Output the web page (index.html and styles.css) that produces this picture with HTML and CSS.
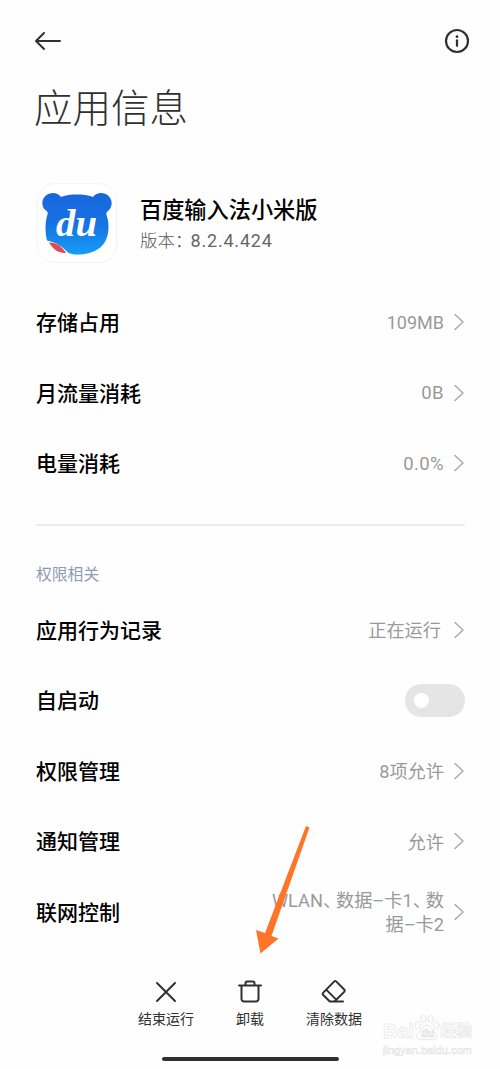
FILE: index.html
```html
<!DOCTYPE html>
<html lang="zh-CN">
<head>
  <meta charset="UTF-8">
  <title>应用信息</title>
  <link rel="stylesheet" href="styles.css">
</head>
<body>
  <div class="screen">
    <header class="topbar">
      <svg class="back" width="28" height="20" viewBox="0 0 28 20"><path d="M26 10H2M10 2L2 10l8 8"/></svg>
      <svg class="info" width="26" height="26" viewBox="0 0 26 26"><circle cx="13" cy="13" r="11"/><path d="M13 12.300v5.500"/><circle class="dot" cx="13" cy="8.700" r="1.400"/></svg>
    </header>
    <h1>应用信息</h1>

    <section class="app">
      <div class="app-icon">
        <svg width="78" height="78" viewBox="0 0 78 78">
          <defs>
            <linearGradient id="bear" x1="0" y1="0" x2="0" y2="1">
              <stop offset="0" stop-color="#1766dc"/>
              <stop offset="0.500" stop-color="#1673e4"/>
              <stop offset="1" stop-color="#159cf6"/>
            </linearGradient>
          </defs>
          <path fill="url(#bear)" d="M23 13C28 11 33 10.500 39 10.500s11 .500 16 2.500C58 8.500 65 7.500 69.500 11c5.500 4 5.500 12 .500 16-1.500 1-2 2-1.500 4 1 3 2 6 2 12C70.500 60 60 70.500 39 70.500c-4 0-6-.500-9-2-5-5-11-10-21-12-1-4-1.500-8-1.500-13 0-5 1-10 2-13 .500-2 0-3-1.500-4C3 23 3 15 8.500 11 13 7.500 20 8.500 23 13z"/>
          <path fill="#e4494d" d="M11 58.500c7-.500 13 4 17 10.500-7 .500-13-3.500-17-10.500z"/>
          <text class="du" x="18" y="52" textLength="41" lengthAdjust="spacingAndGlyphs">du</text>
        </svg>
      </div>
      <div class="app-text">
        <div class="app-name">百度输入法小米版</div>
        <div class="app-version">版本：<span>8.2.4.424</span></div>
      </div>
    </section>

    <ul class="list">
      <li><span class="name">存储占用</span><span class="value">109MB</span><svg class="arrow" width="12" height="18" viewBox="0 0 12 18"><path d="M2 1.500L10 9l-8 7.500"/></svg></li>
      <li><span class="name">月流量消耗</span><span class="value short">0B</span><svg class="arrow" width="12" height="18" viewBox="0 0 12 18"><path d="M2 1.500L10 9l-8 7.500"/></svg></li>
      <li><span class="name">电量消耗</span><span class="value short">0.0%</span><svg class="arrow" width="12" height="18" viewBox="0 0 12 18"><path d="M2 1.500L10 9l-8 7.500"/></svg></li>
    </ul>

    <div class="divider"></div>
    <h2>权限相关</h2>

    <ul class="list">
      <li><span class="name">应用行为记录</span><span class="value cn running">正在运行</span><svg class="arrow" width="12" height="18" viewBox="0 0 12 18"><path d="M2 1.500L10 9l-8 7.500"/></svg></li>
      <li><span class="name">自启动</span><span class="switch"></span></li>
      <li><span class="name">权限管理</span><span class="value cn">8项允许</span><svg class="arrow" width="12" height="18" viewBox="0 0 12 18"><path d="M2 1.500L10 9l-8 7.500"/></svg></li>
      <li><span class="name">通知管理</span><span class="value cn">允许</span><svg class="arrow" width="12" height="18" viewBox="0 0 12 18"><path d="M2 1.500L10 9l-8 7.500"/></svg></li>
      <li><span class="name">联网控制</span><span class="value cn network">WLAN<i>、</i>数据–卡1<i>、</i>数<br>据–卡2</span><svg class="arrow" width="12" height="18" viewBox="0 0 12 18"><path d="M2 1.500L10 9l-8 7.500"/></svg></li>
    </ul>

    <footer class="actions">
      <div class="action">
        <svg width="28" height="28" viewBox="0 0 28 28"><path d="M5 5l18 18M23 5L5 23"/></svg>
        <span>结束运行</span>
      </div>
      <div class="action">
        <svg width="28" height="28" viewBox="0 0 28 28"><path d="M3 7.500h22M5.500 7.500v13.500a2.500 2.500 0 0 0 2.500 2.500h12a2.500 2.500 0 0 0 2.500-2.500V7.500M9.500 7V5a1.500 1.500 0 0 1 1.500-1.500h6A1.500 1.500 0 0 1 18.500 5v2"/></svg>
        <span>卸载</span>
      </div>
      <div class="action">
        <svg width="28" height="28" viewBox="0 0 28 28"><path d="M14.300 3.400a1.300 1.300 0 0 1 1.800 0l8.300 8.400a1.300 1.300 0 0 1 0 1.800L14.500 23.500H9.800L3 16.700a1.300 1.300 0 0 1 0-1.800zM6.200 11.600l10 10M14 23.500h9"/></svg>
        <span>清除数据</span>
      </div>
    </footer>
    <div class="home-bar"></div>

    <svg class="pointer" width="60" height="134" viewBox="0 0 60 134"><path d="M56 6l3.500 1.500-38 108.500 7 2.500-18 15L6 110l9 3z"/></svg>

    <div class="watermark">
      <div class="brand">
        <span>Bai</span>
        <svg width="26" height="30" viewBox="0 0 29 30"><ellipse cx="4" cy="12" rx="3" ry="4"/><ellipse cx="10.500" cy="5" rx="3" ry="4"/><ellipse cx="18.500" cy="5" rx="3" ry="4"/><ellipse cx="25" cy="12" rx="3" ry="4"/><path d="M14.500 12c5 0 6 5 9 8s3 8-2 8H7c-5 0-5-5-2-8s4.500-8 9.500-8z"/><text x="8" y="25">du</text></svg>
        <span class="jingyan">经验</span>
      </div>
      <div class="site">jingyan.baidu.com</div>
    </div>
  </div>
</body>
</html>
```
FILE: styles.css
```css
* {
  box-sizing: border-box;
}
body {
  margin: 0;
  background: #fefefe;
  font-family: "Noto Sans CJK SC", sans-serif;
  color: #000;
}
.screen {
  position: relative;
  display: flex;
  flex-direction: column;
  height: 1069px;
  padding: 28px 35px 0 36px;
  overflow: hidden;
}
svg {
  display: block;
  fill: none;
  stroke-linecap: round;
  stroke-linejoin: round;
}
.topbar {
  display: flex;
  justify-content: space-between;
  align-items: center;
  height: 26px;
  margin: 0 -5px 0 -2px;
  stroke: #303030;
  stroke-width: 2;
}
.info {
  stroke-width: 2.200;
}
.dot {
  fill: #303030;
  stroke: none;
}
h1 {
  margin: 22px 0 2px -2px;
  height: 58px;
  line-height: 58px;
  font-size: 38.500px;
  font-weight: 300;
  color: #303030;
}
.app {
  display: flex;
  align-items: center;
  height: 78px;
  margin-top: 48px;
}
.app-icon {
  width: 80px;
  height: 80px;
  border: 1px solid #f4f4f4;
  border-radius: 18px;
  margin-left: 1px;
  background: #fff;
}
.app-icon svg path,
.app-icon svg text {
  stroke: none;
}
.du {
  font: italic bold 37px "Liberation Serif", serif;
  fill: #fff;
}
.app-text {
  margin-left: 23px;
  padding-top: 2px;
}
.app-name {
  line-height: 32px;
  font-size: 22.200px;
  font-weight: 500;
}
.app-version {
  line-height: 31px;
  font-size: 17.500px;
  font-weight: 300;
  color: #555;
  white-space: nowrap;
}
.app-version span {
  font-family: Roboto, sans-serif;
  font-size: 18px;
  font-weight: 400;
  letter-spacing: 0.800px;
  margin-left: -2px;
  color: #666;
}
.list {
  list-style: none;
  margin: 0;
  padding: 0;
}
.app + .list {
  margin-top: 25px;
}
.list li {
  display: flex;
  align-items: center;
  height: 70.500px;
}
.name {
  flex: 1;
  padding-bottom: 2px;
  font-size: 21px;
  font-weight: 500;
}
.value {
  padding-top: 1px;
  font-family: Roboto, "Noto Sans CJK SC", sans-serif;
  font-size: 18px;
  line-height: 24px;
  text-align: right;
  color: #999;
}
.short {
  font-size: 18.500px;
  letter-spacing: 0.400px;
}
.cn {
  padding-top: 3px;
  font-size: 18.200px;
}
.network {
  font-feature-settings: "halt";
}
.network i {
  font-style: normal;
  letter-spacing: 4px;
}
.running {
  margin-right: 3px;
}
.arrow {
  margin-left: 9px;
  stroke: #aaa;
  stroke-width: 1.500;
}
.switch {
  width: 60px;
  height: 33px;
  border-radius: 17px;
  padding: 9px;
  background: #e5e5e5;
}
.switch::before {
  content: "";
  display: block;
  width: 15px;
  height: 15px;
  border-radius: 50%;
  background: #fff;
}
.divider {
  height: 2px;
  margin-top: 25px;
  background: #ececec;
}
h2 {
  height: 30px;
  line-height: 30px;
  margin: 33px 0 6px;
  font-size: 15.800px;
  font-weight: 400;
  color: #8f9bb0;
}
.actions {
  display: flex;
  justify-content: center;
  margin: 31px 1px 0 0;
}
.action {
  display: flex;
  flex-direction: column;
  align-items: center;
  width: 84px;
  font-size: 14px;
  line-height: 20px;
  color: #303030;
}
.action svg {
  stroke: #303030;
  stroke-width: 2;
  margin-bottom: 2px;
}
.home-bar {
  width: 177px;
  height: 4px;
  margin: 29px auto 0;
  border-radius: 2px;
  background: #303030;
}
.pointer {
  position: absolute;
  left: 250px;
  top: 820px;
  fill: #ff7427;
}
.watermark {
  position: absolute;
  left: 383px;
  top: 1013px;
  width: 94px;
  color: #fff;
  font-family: "Liberation Sans", "Noto Sans CJK SC", sans-serif;
  white-space: nowrap;
  -webkit-text-stroke: 0.500px #e0e0e0;
}
.brand {
  display: flex;
  align-items: flex-end;
  height: 30px;
  font-size: 20px;
  line-height: 24px;
  font-weight: bold;
}
.brand svg {
  stroke: #e4e4e4;
}
.brand text {
  font-size: 12px;
}
.jingyan {
  font-size: 16px;
}
.site {
  font-size: 11px;
  line-height: 14px;
}
```
